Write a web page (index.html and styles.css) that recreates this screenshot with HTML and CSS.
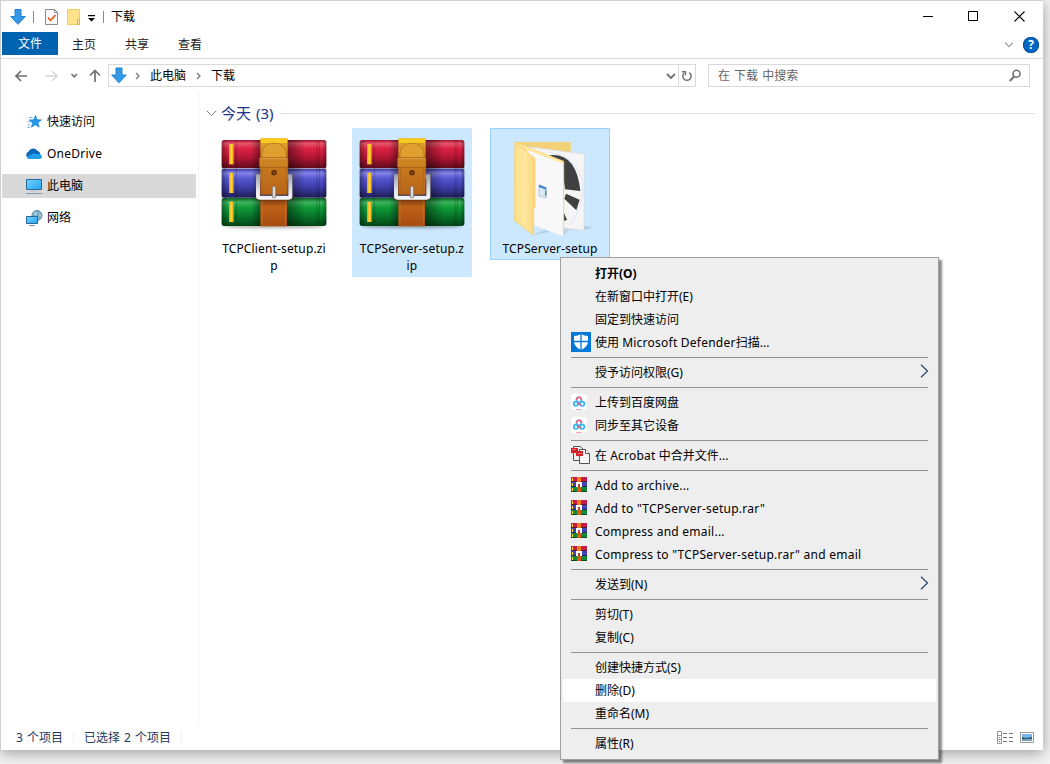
FILE: index.html
```html
<!DOCTYPE html>
<html lang="zh-CN">
<head>
<meta charset="utf-8">
<title>下载</title>
<link rel="stylesheet" href="styles.css">
</head>
<body>
<svg class="defs" width="0" height="0">
  <defs>
    <linearGradient id="red" x2="0" y2="1"><stop offset="0" stop-color="#a01030"/><stop offset=".12" stop-color="#e8546c"/><stop offset=".3" stop-color="#dc2344"/><stop offset=".6" stop-color="#b71735"/><stop offset="1" stop-color="#5e0a1b"/></linearGradient>
    <linearGradient id="blue" x2="0" y2="1"><stop offset="0" stop-color="#38389c"/><stop offset=".15" stop-color="#8384ea"/><stop offset=".35" stop-color="#5555cf"/><stop offset=".65" stop-color="#3d3da8"/><stop offset="1" stop-color="#1d1d55"/></linearGradient>
    <linearGradient id="green" x2="0" y2="1"><stop offset="0" stop-color="#086222"/><stop offset=".15" stop-color="#3cb25c"/><stop offset=".35" stop-color="#0f9a37"/><stop offset=".65" stop-color="#08752a"/><stop offset="1" stop-color="#034515"/></linearGradient>
    <linearGradient id="side"><stop offset="0" stop-color="#000" stop-opacity=".35"/><stop offset=".06" stop-color="#000" stop-opacity="0"/><stop offset=".28" stop-color="#000" stop-opacity="0"/><stop offset=".37" stop-color="#000" stop-opacity=".4"/><stop offset=".62" stop-color="#000" stop-opacity=".45"/><stop offset=".8" stop-color="#000" stop-opacity="0"/><stop offset=".96" stop-color="#000" stop-opacity="0"/><stop offset="1" stop-color="#000" stop-opacity=".35"/></linearGradient>
    <linearGradient id="leather" x2="0" y2="1"><stop offset="0" stop-color="#d99a10"/><stop offset=".12" stop-color="#dd9a2a"/><stop offset=".5" stop-color="#c87a1d"/><stop offset="1" stop-color="#b9641b"/></linearGradient>
    <linearGradient id="leather2" x2="0" y2="1"><stop offset="0" stop-color="#7c3a0a"/><stop offset=".3" stop-color="#bd6018"/><stop offset="1" stop-color="#a64c10"/></linearGradient>
    <linearGradient id="gold" x2="1" y2="0"><stop offset="0" stop-color="#e59a10"/><stop offset=".5" stop-color="#ffd83a"/><stop offset="1" stop-color="#e8a010"/></linearGradient>
    <linearGradient id="steel" gradientUnits="userSpaceOnUse" x1="0" y1="230" x2="0" y2="305"><stop offset="0" stop-color="#9aa1a8"/><stop offset=".6" stop-color="#dfe4e8"/><stop offset="1" stop-color="#f5f7f8"/></linearGradient>
    <linearGradient id="flap"><stop offset="0" stop-color="#ffdf85"/><stop offset=".5" stop-color="#ffe7a0"/><stop offset="1" stop-color="#f9d57a"/></linearGradient>
    <linearGradient id="screen" x2="1" y2="1"><stop offset="0" stop-color="#74d2ff"/><stop offset="1" stop-color="#24a5f2"/></linearGradient>
    <filter id="soft" x="-20%" y="-100%" width="140%" height="300%"><feGaussianBlur stdDeviation="5"/></filter>

    <symbol id="archive" viewBox="27 90 360 324">
      <ellipse cx="207" cy="384" rx="152" ry="7" opacity=".3" filter="url(#soft)"/>
      <rect x="50" y="126" width="314" height="85" rx="8" fill="url(#red)"/>
      <rect x="50" y="212" width="314" height="87" rx="8" fill="url(#blue)"/>
      <rect x="50" y="300" width="314" height="84" rx="8" fill="url(#green)"/>
      <rect x="50" y="126" width="314" height="258" rx="8" fill="url(#side)"/>
      <g fill="none" stroke="#000" stroke-opacity=".22" stroke-width="3"><path d="M94 127v256M336 127v256M343 127v256"/></g>
      <g fill="url(#gold)"><rect x="72" y="138" width="14" height="61"/><rect x="72" y="224" width="14" height="61"/><rect x="72" y="311" width="14" height="61"/></g>
      <rect x="166" y="302" width="80" height="83" fill="url(#leather2)"/>
      <path d="M171 310v72M242 310v72" stroke="#dc8a39" stroke-width="2" stroke-dasharray="4 3"/>
      <path d="M167 236h-8v60q0 5 5 5h87q5 0 5-5v-60h-9" fill="none" stroke="#5c3421" stroke-opacity=".55" stroke-width="15"/>
      <path d="M167 235h-8v60q0 4 5 4h87q5 0 5-4v-60h-9" fill="none" stroke="url(#steel)" stroke-width="12"/>
      <rect x="166" y="121" width="82" height="169" rx="3" fill="url(#leather)"/>
      <path d="M167 121h80v14h-80z" fill="#ffda22" opacity=".75"/>
      <path d="M171 180v-8q0-36 36-36t36 36v8" fill="#dfa02f" stroke="#895415" stroke-width="2" stroke-dasharray="4 2"/>
      <path d="M172 211v75M242 211v75" stroke="#9a5812" stroke-width="2" stroke-dasharray="4 3"/>
      <rect x="163" y="179" width="86" height="29" rx="3" fill="#cc8423" stroke="#98550e" stroke-width="2"/>
      <path d="M166 182h80" stroke="#edb35a" stroke-width="2"/>
      <circle cx="207" cy="224" r="8" fill="#5a2c05"/><circle cx="207" cy="224" r="4" fill="#8a4810"/>
      <path d="M202 299v-28q0-7 5-7t5 7v28z" fill="#d7dce1" stroke="#71665b" stroke-width="2"/>
    </symbol>

    <symbol id="rar" viewBox="0 0 16 16">
      <path fill="#c61a48" d="M0 0h16v5H0z"/><path fill="#4345b5" d="M0 5h16v5H0z"/><path fill="#138838" d="M0 10h16v5H0z"/>
      <path fill="#631535" d="M0 4h16v1H0z"/><path fill="#25256a" d="M0 9h16v1H0z"/><path fill="#0b4a1e" d="M0 14h16v1H0z"/>
      <path fill="#ffdc22" d="M1 1h1v3H1zM1 6h1v3H1zM1 11h1v3H1z"/>
      <path fill="#ef7d12" d="M6 0h4v5H6z"/><path fill="#d95e12" d="M6 10h4v5H6z"/>
      <path d="M5 5h6v5H9V7H7v3H5z" fill="#fff"/><path fill="#c23b32" d="M7 7h2v3H7z"/>
    </symbol>
    <symbol id="pan" viewBox="0 0 16 16">
      <rect width="16" height="16" rx="3" fill="#fff"/>
      <circle cx="8" cy="5.700" r="2.500" fill="none" stroke="#56a9f4" stroke-width="1.600"/>
      <path d="M5.500 6q.4-2.600 2.500-2.800t2.500 2.800" stroke="#f2607c" stroke-width="1.600" fill="none"/>
      <circle cx="4.800" cy="9.700" r="2.100" fill="none" stroke="#36b8f5" stroke-width="1.800"/>
      <circle cx="11.300" cy="9.700" r="2.100" fill="none" stroke="#36b8f5" stroke-width="1.800"/>
      <path d="M6.500 8.500l3.200 3" stroke="#f25775" stroke-width="1.600"/><path d="M5 15.500h6" stroke="#f4a6bd"/>
    </symbol>
    <symbol id="down" viewBox="0 0 16 16"><path d="M5 .5h6v7h4.300L8 15.300.7 7.500H5z" fill="#3498e8" stroke="#2482ce"/></symbol>
    <symbol id="next" viewBox="0 0 9 14"><path d="M1 .8L7.500 7 1 13.200" fill="none" stroke="#29436f" stroke-width="1.200"/></symbol>
  </defs>
</svg>

<div class="window">
  <header class="titlebar">
    <svg class="t-down" width="16" height="16"><use href="#down"/></svg>
    <i class="bar bar1"></i>
    <svg class="t-check" width="13" height="16" viewBox="0 0 13 16"><path d="M.5.5h9l3 3v12H.5z" fill="#fafafa" stroke="#8b8b8b"/><path d="M9.500.5v3h3" fill="none" stroke="#8b8b8b"/><path d="M3 8.500l2.500 3L10.500 6" fill="none" stroke="#e75b22" stroke-width="1.800"/></svg>
    <svg class="t-folder" width="13" height="16" viewBox="0 0 13 16"><path d="M.5.5h12v15H.5z" fill="#ffe28a" stroke="#f0cc66"/><path d="M10.500 15.500v-5h2v5z" fill="#ffe9a8" stroke="#d9b24b"/></svg>
    <svg class="t-drop" width="7" height="7" viewBox="0 0 7 7"><path d="M0 0h7v1.200H0zM0 3h7L3.500 6.600z"/></svg>
    <i class="bar bar2"></i>
    <span class="title">下载</span>
    <div class="controls">
      <svg width="11" height="11"><path d="M1 5.500h10" stroke="#000"/></svg>
      <svg width="11" height="11"><path d="M.5.5h9v9h-9z" fill="none" stroke="#000"/></svg>
      <svg width="11" height="11"><path d="M.5.5l10 10M10.500.5l-10 10" stroke="#000" stroke-width="1.100"/></svg>
    </div>
  </header>
  <nav class="tabs">
    <span class="tab file">文件</span><span class="tab">主页</span><span class="tab">共享</span><span class="tab">查看</span>
    <svg class="ribbon" width="10" height="6"><path d="M1 .7l4 4 4-4" fill="none" stroke="#9a9a9a" stroke-width="1.200"/></svg>
    <span class="help">?</span>
  </nav>
  <div class="address-row">
    <svg class="arrows" width="88" height="16" viewBox="0 0 88 16">
      <g fill="none" stroke-width="1.700"><path d="M7 3L2 8l5 5M2 8h11" stroke="#707070"/><path d="M38 3l5 5-5 5M43 8H31" stroke="#d8d8d8"/><path d="M57.500 6l2.700 2.700L63 6" stroke="#777"/><path d="M76 7.500l5-5 5 5M81 3v11" stroke="#707070"/></g>
    </svg>
    <div class="address">
      <svg width="16" height="17"><use href="#down"/></svg>
      <svg class="sep" width="5" height="8"><path d="M1 1l3 3-3 3" fill="none" stroke="#777" stroke-width="1.300"/></svg>
      <span>此电脑</span>
      <svg class="sep" width="5" height="8"><path d="M1 1l3 3-3 3" fill="none" stroke="#777" stroke-width="1.300"/></svg>
      <span>下载</span>
      <svg class="addr-drop" width="10" height="7"><path d="M1 1l4 4 4-4" fill="none" stroke="#707070" stroke-width="1.800"/></svg>
      <div class="refresh"><svg width="12" height="12" viewBox="0 0 12 12"><path d="M8.200 2.600a4.200 4.200 0 1 1-5 .4" fill="none" stroke="#707070" stroke-width="1.500"/><path d="M1 1.700h3.500v3.800" fill="none" stroke="#707070" stroke-width="1.400"/></svg></div>
    </div>
    <div class="search"><span>在 下载 中搜索</span><svg width="13" height="13"><circle cx="7.500" cy="4.800" r="3.500" fill="none" stroke="#707070" stroke-width="1.600"/><path d="M5 7.500L.8 12" stroke="#707070" stroke-width="2"/></svg></div>
  </div>
  <main class="main">
    <aside class="sidebar">
      <div class="place"><svg width="18" height="16" viewBox="0 0 18 16"><path d="M10.500 1.500l1.500 4.200 4.500.2-3.600 2.800 1.300 4.500-3.700-2.500-4.200 2.500 1.400-4.400L4 6l4.700-.2z" fill="#2397e8" stroke="#1784cc" stroke-width=".7"/><path d="M4 3.500h3.500M2.500 8h3M2.500 11h3M2.500 13.500h2.500" stroke="#65b9ed"/></svg><span>快速访问</span></div>
      <div class="place"><svg width="18" height="16" viewBox="0 0 18 16"><path d="M4 12.500a3.700 3.700 0 0 1-.5-7 5 5 0 0 1 8.800-.8 4.300 4.300 0 0 1 3 4l-4 3.800z" fill="#0868bb"/><path d="M3 12.700q-1.200-.5-1-2L8 7.500l5 .4q4 .3 4 2.800 0 2.300-2.500 2.300H4z" fill="#259ee9"/></svg><span class="latin">OneDrive</span></div>
      <div class="place selected"><svg width="18" height="16" viewBox="0 0 18 16"><path d="M1.500 1.500h15v10h-15z" fill="url(#screen)" stroke="#28699c"/><path d="M1 15.500h16" stroke="#8196a8"/><path d="M5 13h8" stroke="#b8c6d0"/></svg><span>此电脑</span></div>
      <div class="place"><svg width="18" height="16" viewBox="0 0 18 16"><circle cx="12" cy="5.500" r="5" fill="#79acc5" stroke="#5e8eaa"/><path d="M9 3l2-1.500 1 2.500-2 2M14 3l2 2-1 3z" fill="#b4d2e0"/><path d="M1.500 6.500h11v7h-11z" fill="url(#screen)" stroke="#266997"/><path d="M4 15.500h6" stroke="#8196a8"/></svg><span>网络</span></div>
    </aside>
    <section class="content">
      <div class="group"><svg width="11" height="7"><path d="M.7.7l4.800 5 4.800-5" fill="none" stroke="#777"/></svg><span>今天 (3)</span><i></i></div>
      <div class="files">
        <div class="tile"><svg width="120" height="108"><use href="#archive"/></svg><div class="name">TCPClient-setup.zi<br>p</div></div>
        <div class="tile on"><svg width="120" height="108"><use href="#archive"/></svg><div class="name">TCPServer-setup.z<br>ip</div></div>
        <div class="tile on focus">
          <svg width="120" height="108" viewBox="15 24 360 324">
            <path d="M145 345l40-18 50 22 15-20 55 0 18-8-28-4z" fill="#7d9ab0" opacity=".3"/>
            <path d="M89 66h168v60l-22 150H100z" fill="#f3d176"/>
            <path d="M130 80l168 22-1 229-60-6z" fill="#f5f5f5" stroke="#d7d7d7" stroke-width="2"/>
            <path d="M190 97q84 10 103 90 6 70-40 130" fill="none" stroke="#dce8f5" stroke-width="3"/>
            <path d="M192 106q82-10 94 107l-46-5-7-60z" fill="#404040"/><path d="M243 221l41 18-10 32-36-35zM237 278l9 22-10 3z" fill="#404040"/>
            <path d="M125 84l111 41v225l-91-34z" fill="#f8f8f8"/>
            <path d="M91 67l145 57v226" fill="none" stroke="#ecd58d" stroke-width="3"/>
            <path d="M91 67l143 57v6L119 88z" fill="#ffe69b"/>
            <path d="M89 66l61 49v147l-4 5v79l-58-44z" fill="url(#flap)" stroke="#ecc975" stroke-width="2"/>
            <path d="M162 194l22 9v31l-22-6z" fill="#dbe9f5" stroke="#9db8d0" stroke-width="2"/><path d="M162 194l22 9v6l-22-8z" fill="#347bd4"/><path d="M180 211l4 1v16l-4-1z" fill="#3f9863"/>
          </svg><div class="name">TCPServer-setup</div>
        </div>
      </div>
    </section>
  </main>
  <footer class="status">
    <span class="count">3 个项目</span><i></i><span class="chosen">已选择 2 个项目</span><i></i>
    <div class="views"><svg width="17" height="13" viewBox="0 0 17 13"><path d="M.5.5h4v12h-4zM.5 4.500h4M.5 8.500h4" fill="#fff" stroke="#999"/><path d="M6 2.500h4m2 0h4M6 6.500h4m2 0h4M6 10.500h4m2 0h4" stroke="#777"/><path fill="#38c" d="M2 6h1v1H2z"/><path fill="#c33" d="M2 10h1v1H2z"/></svg>
    <svg width="14" height="11" viewBox="0 0 14 11"><path d="M.5.5h13v10H.5z" fill="#fff" stroke="#999"/><path d="M2 2h10v7H2z" fill="#78b5f0"/><path d="M2 5l4 1 6-1v2H2z" fill="#285d66"/><path d="M2 7l10 1v1H2z" fill="#7599a8"/></svg></div>
  </footer>
</div>

<div class="menu">
  <div class="item bold">打开(O)</div>
  <div class="item">在新窗口中打开(E)</div>
  <div class="item">固定到快速访问</div>
  <div class="item"><svg class="shield" width="20" height="20" viewBox="0 0 20 20"><path fill="#0078d7" d="M0 0h20v20H0z"/><path d="M10 2q3 2 7 2v5q0 6-7 9-7-3-7-9V4q4 0 7-2z" fill="#fff"/><path d="M10 2v16M3 9.500h14" stroke="#0078d7" stroke-width="1.300"/></svg>使用 <span class="latin">Microsoft Defender</span>扫描...</div>
  <hr>
  <div class="item">授予访问权限(G)<svg class="more" width="9" height="14"><use href="#next"/></svg></div>
  <hr>
  <div class="item"><svg class="icon" width="16" height="16"><use href="#pan"/></svg>上传到百度网盘</div>
  <div class="item"><svg class="icon" width="16" height="16"><use href="#pan"/></svg>同步至其它设备</div>
  <hr>
  <div class="item"><svg class="shield" width="20" height="20" viewBox="0 0 20 20"><path d="M2.500 1.500h7l3 3v11h-10z" fill="#eee" stroke="#555"/><path d="M8.500 4.500h6l4 4v10h-10z" fill="#f6f6f6" stroke="#555"/><path d="M14.500 4.500v4h4" fill="#fff" stroke="#555"/><path d="M0 3h7v3h5v5H5V8H0z" fill="#d3222a"/><path d="M1 4.500h4M7 8.500h4" stroke="#ec6c70"/></svg>在 <span class="latin">Acrobat</span> 中合并文件...</div>
  <hr>
  <div class="item latin"><svg class="icon" width="16" height="16"><use href="#rar"/></svg>Add to archive...</div>
  <div class="item latin"><svg class="icon" width="16" height="16"><use href="#rar"/></svg>Add to "TCPServer-setup.rar"</div>
  <div class="item latin"><svg class="icon" width="16" height="16"><use href="#rar"/></svg>Compress and email...</div>
  <div class="item latin"><svg class="icon" width="16" height="16"><use href="#rar"/></svg>Compress to "TCPServer-setup.rar" and email</div>
  <hr>
  <div class="item">发送到(N)<svg class="more" width="9" height="14"><use href="#next"/></svg></div>
  <hr>
  <div class="item">剪切(T)</div>
  <div class="item">复制(C)</div>
  <hr>
  <div class="item">创建快捷方式(S)</div>
  <div class="item hover">删除(D)</div>
  <div class="item">重命名(M)</div>
  <hr>
  <div class="item">属性(R)</div>
</div>
</body>
</html>
```

FILE: styles.css
```css
* { box-sizing: border-box; }
body { margin: 0; width: 1050px; height: 764px; overflow: hidden; position: relative; background: #f3f3f3; font: 12px/18px "Noto Sans", "Noto Sans CJK SC", sans-serif; color: #000; }
svg { display: block; flex: none; }
.defs { position: absolute; }
.window { width: 1043px; height: 750px; background: #fff; border: 1px solid #d0d0d0; border-right: 0; border-bottom: 0; box-shadow: 0 3px 14px rgba(0,0,0,.36); display: flex; flex-direction: column; }
.titlebar { height: 31px; display: flex; align-items: center; padding-left: 9px; flex: none; }
.bar { width: 1px; height: 12px; background: #888; }
.bar1 { margin-left: 7px; }
.t-check { margin-left: 11px; }
.t-folder { margin-left: 9px; }
.t-drop { margin: 3px 0 0 8px; }
.bar2 { margin-left: 8px; }
.title { margin-left: 7px; }
.controls { margin-left: auto; padding-right: 18px; display: flex; gap: 35px; }
.tabs { height: 27px; border-bottom: 1px solid #dadbdc; display: flex; align-items: flex-start; padding-left: 1px; flex: none; }
.tab { width: 53px; height: 23px; padding-right: 1px; line-height: 25px; text-align: center; color: #222; }
.tab.file { width: 56px; padding-right: 0; line-height: 23px; background: #0063b1; color: #fff; }
.ribbon { margin: 10px 9px 0 auto; }
.help { width: 16px; height: 16px; margin: 5px 4px 0 0; border-radius: 50%; background: #0067c5; box-shadow: inset 0 0 0 1px #0a4f9c; color: #fff; font: bold 12px/16px "Open Sans", sans-serif; text-align: center; }
.address-row { height: 33px; display: flex; align-items: center; padding: 0 13px; flex: none; }
.arrows { margin: 1px 6px 0 0; }
.address { width: 588px; height: 23px; border: 1px solid #d9d9d9; display: flex; align-items: center; padding-left: 2px; line-height: 20px; }
.address .sep { margin: 0 10px 0 8px; }
.address span + .sep { margin: 0 10px; }
.addr-drop { margin: 2px 0 0 auto; }
.refresh { width: 17px; height: 21px; border-left: 1px solid #d9d9d9; margin-left: 2px; display: grid; place-items: center; }
.search { width: 322px; height: 23px; margin-left: 12px; border: 1px solid #d9d9d9; display: flex; align-items: center; justify-content: space-between; padding: 0 7px 0 9px; color: #666; word-spacing: 1px; }
.main { height: 634px; display: flex; flex: none; }
.sidebar { width: 198px; padding: 18px 0 0 1px; border-right: 1px solid #f2f2f2; display: flex; flex-direction: column; gap: 8px; }
.place { width: 194px; height: 24px; display: flex; align-items: center; gap: 4px; padding-left: 23px; }
.place span { margin-top: -1px; }
.selected { background: #d9d9d9; }
.content { flex: 1; padding: 12px 8px 0 7px; }
.group { height: 18px; display: flex; align-items: center; font-size: 15px; color: #1e3287; }
.group span { margin-left: 4px; word-spacing: 1px; }
.group i { flex: 1; height: 1px; margin-left: 7px; background: #e0e0e0; }
.files { display: flex; align-items: flex-start; gap: 18px; padding: 6px 0 0 8px; }
.tile { width: 120px; height: 149px; }
.tile.on { background: #cce8ff; }
.tile.focus { height: 132px; box-shadow: inset 0 0 0 1px #99d1ff; }
.name { margin-top: 4px; text-align: center; line-height: 17px; font-size: 12px; letter-spacing: .15px; white-space: nowrap; }
.latin { letter-spacing: .24px; }
.status { height: 23px; display: flex; align-items: center; padding-left: 15px; color: #1e395b; word-spacing: 1px; flex: none; }
.status i { width: 1px; height: 11px; background: #eee; margin: 0 10px; }
.views { margin-left: auto; padding-right: 9px; display: flex; align-items: center; gap: 6px; }
.menu { position: absolute; left: 560px; top: 257px; width: 379px; height: 503px; padding: 4px 2px; background: #eee; border: 1px solid #a0a0a0; box-shadow: 3px 3px 2px rgba(0,0,0,.45); }
.item { height: 23px; line-height: 24px; padding-left: 32px; position: relative; white-space: pre; }
.item .icon, .item .shield { position: absolute; left: 8px; top: 3px; }
.item .shield { top: 1px; }
.item .more { position: absolute; right: 7px; top: 3px; }
.bold { font-weight: bold; }
.hover { background: #fff; }
.menu hr { height: 1px; margin: 3px 8px; border: 0; background: #919191; }
```
